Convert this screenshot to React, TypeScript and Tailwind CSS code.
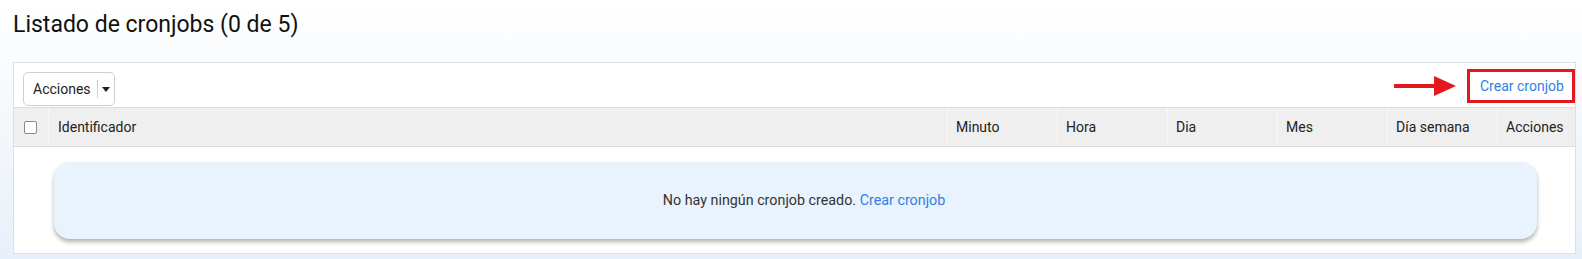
import { ChangeEvent, useState } from 'react';

const columns = ['Minuto', 'Hora', 'Dia', 'Mes', 'Día semana', 'Acciones'];

function RedArrow() {
  return (
    <svg width="62" height="20" viewBox="0 0 62 20" className="shrink-0">
      <line x1="0" y1="10" x2="42" y2="10" stroke="#e3191f" strokeWidth="4" />
      <polygon points="40,0 62,10 40,20" fill="#e3191f" />
    </svg>
  );
}

export default function App() {
  const [checked, setChecked] = useState(false);

  return (
    <div className="min-h-screen bg-gradient-to-b from-white to-[#e7f0fa] font-['Roboto',sans-serif] text-[#222]">
      {/* Title */}
      <h1 className="pl-[13px] pt-[12px] text-[23px] leading-[26px] font-normal text-[#111]">
        Listado de cronjobs (0 de 5)
      </h1>

      {/* Panel */}
      <div className="ml-[13px] mt-[24px] w-[1563px] border border-[#dcdfe3] bg-white">
        {/* Toolbar */}
        <div className="flex h-[44px] items-start justify-between pl-[9px]">
          <button className="mt-[9px] flex h-[34px] w-[92px] items-center rounded-[5px] border border-[#cfcfcf] bg-white pl-[9px] text-[14px] text-[#222]">
            <span>Acciones</span>
            <span className="ml-[6px] h-[18px] w-px bg-[#cfcfcf]" />
            <span className="ml-[4px] h-0 w-0 border-x-[4px] border-t-[5px] border-x-transparent border-t-[#222]" />
          </button>
          <div className="mt-[6px] flex items-center gap-[11px]">
            <RedArrow />
            <div className="flex h-[34px] w-[108px] items-center border-[3px] border-[#e3191f] pl-[10px]">
              <a href="#" className="text-[14px] text-[#2f7fe6]">Crear cronjob</a>
            </div>
          </div>
        </div>

        {/* Header row */}
        <div className="grid h-[40px] grid-cols-[34px_1fr_110px_110px_110px_110px_110px_78px] border-y border-[#dcdcdc] bg-[#efefef] text-[14px] text-[#222]">
          <div className="flex items-center pl-[10px]">
            <input
              type="checkbox"
              checked={checked}
              onChange={(e: ChangeEvent<HTMLInputElement>) => setChecked(e.target.checked)}
              className="h-[13px] w-[13px] appearance-none rounded-[2px] border border-[#8a8a8a] bg-white"
            />
          </div>
          <div className="flex items-center border-l border-[#f8f8f8] pl-[9px]">Identificador</div>
          {columns.map((c) => (
            <div key={c} className="flex items-center border-l border-[#f8f8f8] pl-[8px]">
              {c}
            </div>
          ))}
        </div>

        {/* Empty state */}
        <div className="pl-[40px] pr-[38px] pt-[15px] pb-[14px]">
          <div className="flex h-[77px] items-center justify-center rounded-[16px] bg-[#e9f3fe] pl-[17px] text-[14.3px] text-[#333] shadow-[0_3px_4px_rgba(0,0,0,0.3)]">
            <span>
              No hay ningún cronjob creado.{' '}
              <a href="#" className="text-[#2f7fe6]">Crear cronjob</a>
            </span>
          </div>
        </div>
      </div>
    </div>
  );
}
